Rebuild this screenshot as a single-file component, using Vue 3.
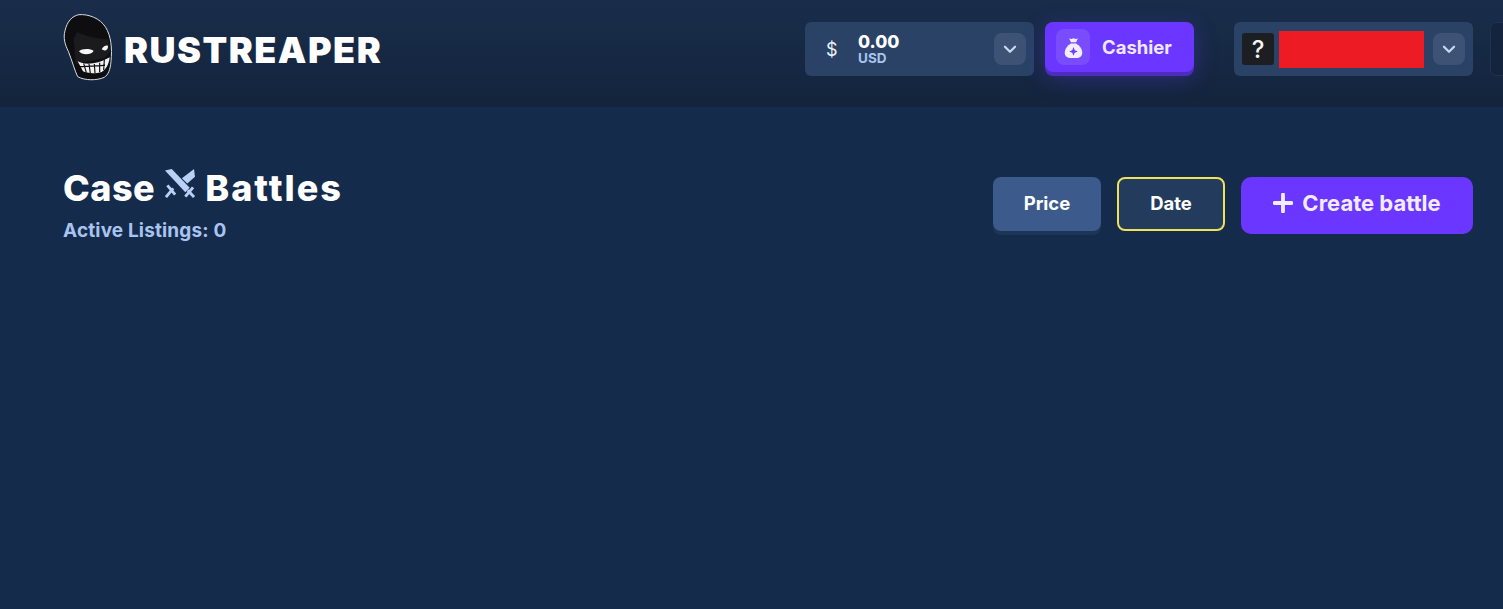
<template>
  <div class="page">
    <header class="top">
      <a class="logo">
        <svg class="skull" viewBox="0 0 210 234" width="70" height="78">
          <path d="M72 20C100 18 135 30 152 58C168 84 172 120 168 160C166 185 160 200 148 208C125 218 90 218 68 206C58 185 52 160 40 130C30 110 24 90 30 68C36 42 50 24 72 20Z" fill="#0e0d0f" stroke="#d9dde3" stroke-width="3" />
          <path d="M56 92L66 72C90 84 125 92 160 94L166 130L150 150L62 168Z" fill="#1b1a1d" />
          <path d="M72 130C80 121 106 121 116 129C108 142 80 142 72 130Z" fill="#f7f7f7" />
          <path d="M140 124C144 115 155 110 159 114C160 125 150 132 140 124Z" fill="#f7f7f7" />
          <path d="M68 160C90 172 125 170 164 148C162 170 152 186 140 192C120 198 95 196 84 190Z" fill="#f2f2f2" />
          <path d="M86 166L94 194M102 168L106 196M118 168L120 196M134 164L134 192M148 156L146 186M74 176L150 172" stroke="#0e0d0f" stroke-width="3.5" fill="none" />
        </svg>
        <span class="logo-text">RUSTREAPER</span>
      </a>

      <div class="balance">
        <span class="currency">$</span>
        <div class="amount">
          <strong>0.00</strong>
          <small>USD</small>
        </div>
        <button class="chevron">
          <svg viewBox="0 0 12 8" width="14" height="9"><path d="M1.5 1.5L6 6l4.5-4.5" /></svg>
        </button>
      </div>

      <button class="cashier">
        <span class="bag-box">
          <svg viewBox="0 0 24 26" width="21" height="23">
            <path d="M7 2.5C9 4 10 3.2 12 2.5C14 3.2 15 4 17 2.5L15 7H9Z" fill="#f3eeff" />
            <path d="M9 8.5H15C19 11 22 15 22 19C22 23 19 25 15 25H9C5 25 2 23 2 19C2 15 5 11 9 8.5Z" fill="#f3eeff" />
            <path d="M12 12.5L13.4 16.1L17 17.5L13.4 18.9L12 22.5L10.6 18.9L7 17.5L10.6 16.1Z" fill="#6f3bff" />
          </svg>
        </span>
        <span>Cashier</span>
      </button>

      <div class="user">
        <span class="avatar">?</span>
        <span class="name-block"></span>
        <button class="chevron">
          <svg viewBox="0 0 12 8" width="14" height="9"><path d="M1.5 1.5L6 6l4.5-4.5" /></svg>
        </button>
      </div>

      <div class="cut-box"></div>
    </header>

    <main class="content">
      <div class="heading">
        <h1>
          <span>Case</span>
          <svg class="swords" viewBox="0 0 32 32" width="31" height="31">
            <path d="M31 1L32 9L24 16L18.5 10.5Z" fill="#b9d0f7" />
            <path d="M1 2.5L8 1L26.5 20.5L22 25Z" fill="#b9d0f7" />
            <path d="M3.5 18L11.5 27.5M9.5 21L2 30" stroke="#b9d0f7" stroke-width="3" fill="none" />
            <path d="M22 29.5L30 20M24.5 23L31 30" stroke="#b9d0f7" stroke-width="3" fill="none" />
          </svg>
          <span class="wide">Battles</span>
        </h1>
        <p>Active Listings: {{ listings }}</p>
      </div>

      <div class="actions">
        <button class="sort">Price</button>
        <button class="sort active">Date</button>
        <button class="create">
          <svg viewBox="0 0 20 20" width="20" height="20"><path d="M10 1.5v17M1.5 10h17" /></svg>
          <span>Create battle</span>
        </button>
      </div>
    </main>
  </div>
</template>

<script setup>
const listings = 0
</script>

<style>
html,
body {
  background: #152b4c;
}
</style>

<style scoped>
.page {
  min-height: 609px;
  background: #152b4c;
  font-family: Inter, "Noto Sans", sans-serif;
  color: #fff;
  overflow: hidden;
}
button {
  border: 0;
  font-family: inherit;
  color: #fff;
  cursor: pointer;
}
.top {
  height: 107px;
  box-sizing: border-box;
  display: flex;
  align-items: flex-start;
  padding: 22px 0 0 55px;
  background: linear-gradient(180deg, #192d4b 0%, #13243c 100%);
}
.logo {
  display: flex;
  align-items: center;
  margin-top: -14px;
  margin-right: auto;
}
.logo-text {
  margin-left: -1px;
  font-size: 36px;
  font-weight: 900;
  letter-spacing: 1.5px;
  line-height: 1;
  margin-top: 5px;
}
.balance {
  width: 229px;
  height: 54px;
  box-sizing: border-box;
  display: flex;
  align-items: center;
  padding: 0 8px 0 21px;
  background: #294265;
  border-radius: 6px;
}
.currency {
  font-size: 18px;
  color: #eef3fb;
  width: 32px;
}
.amount {
  display: flex;
  flex-direction: column;
  line-height: 1;
}
.amount strong {
  font-size: 17.5px;
  font-weight: 800;
}
.amount small {
  margin-top: 1px;
  font-size: 13.5px;
  font-weight: 700;
  color: #a9c4ee;
}
.chevron {
  width: 32px;
  height: 32px;
  margin-left: auto;
  padding: 0;
  display: flex;
  align-items: center;
  justify-content: center;
  background: #3e5275;
  border-radius: 8px;
}
.chevron path {
  fill: none;
  stroke: #c6d8f5;
  stroke-width: 2;
  stroke-linecap: round;
  stroke-linejoin: round;
}
.cashier {
  width: 149px;
  height: 50px;
  margin-left: 11px;
  display: flex;
  align-items: center;
  gap: 12px;
  padding: 0 0 0 11px;
  background: #6b36ff;
  border-radius: 8px;
  box-shadow: 0 4px 0 #4e2cbd, 0 6px 22px rgba(96, 58, 240, 0.35);
  font-size: 18.5px;
  font-weight: 700;
  color: #efe8ff;
}
.bag-box {
  width: 34px;
  height: 36px;
  display: flex;
  align-items: center;
  justify-content: center;
  background: #7a4cff;
  border-radius: 8px;
}
.user {
  width: 239px;
  height: 54px;
  box-sizing: border-box;
  margin-left: 40px;
  display: flex;
  align-items: center;
  padding: 0 8px;
  background: #294265;
  border-radius: 6px;
}
.avatar {
  width: 32px;
  height: 32px;
  display: flex;
  align-items: center;
  justify-content: center;
  background: #1d1e22;
  border-radius: 3px;
  font-size: 24px;
  font-weight: 500;
  color: #f4f4f4;
}
.name-block {
  width: 145px;
  height: 37px;
  margin-left: 5px;
  background: #ed1c24;
}
.cut-box {
  flex: none;
  width: 13px;
  height: 54px;
  margin-left: 17px;
  box-sizing: border-box;
  background: #15243d;
  border: 1px solid #1e324f;
  border-right: 0;
  border-radius: 6px 0 0 6px;
}
.content {
  display: flex;
  justify-content: space-between;
  align-items: flex-start;
  padding: 59px 30px 0 63px;
}
.heading h1 {
  display: flex;
  align-items: center;
  margin: 0;
  font-size: 36px;
  font-weight: 800;
  line-height: 44px;
}
.heading h1 span {
  letter-spacing: 0.5px;
}
.heading h1 .wide {
  letter-spacing: 2px;
}
.swords {
  margin: -10px 10px 0 9px;
}
.heading p {
  margin: 9px 0 0;
  font-size: 19px;
  font-weight: 700;
  line-height: 24px;
  letter-spacing: 0.15px;
  color: #a9c4ee;
}
.actions {
  display: flex;
  align-items: flex-start;
  gap: 16px;
  padding-top: 11px;
}
.sort {
  width: 108px;
  height: 54px;
  padding-bottom: 4px;
  box-sizing: border-box;
  background: #3c5a8c;
  border-radius: 8px;
  box-shadow: 0 4px 0 #1f3557;
  font-size: 18.5px;
  font-weight: 700;
}
.sort.active {
  background: #233c5d;
  border: 2px solid #f1e05a;
  box-shadow: none;
}
.create {
  width: 232px;
  height: 57px;
  padding-bottom: 6px;
  display: flex;
  align-items: center;
  justify-content: center;
  gap: 9px;
  background: #6b36ff;
  border-radius: 10px;
  font-size: 22px;
  font-weight: 700;
  color: #f2ecff;
}
.create path {
  fill: none;
  stroke: #f2ecff;
  stroke-width: 3.8;
  stroke-linecap: round;
}
</style>
